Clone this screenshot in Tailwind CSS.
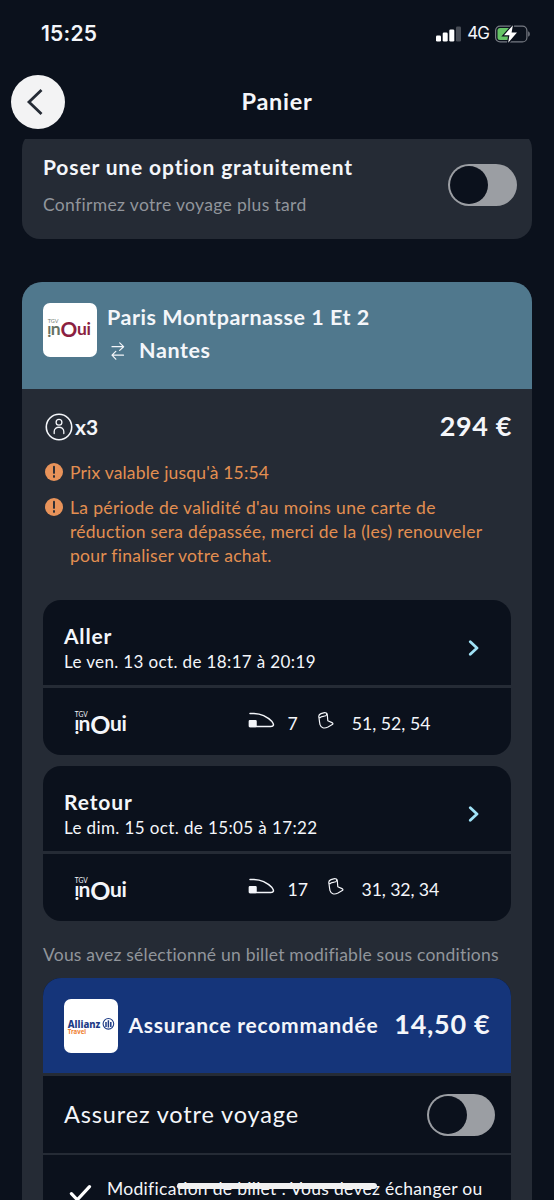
<!DOCTYPE html>
<html lang="fr">
<head>
    <meta charset="UTF-8">
    <meta name="viewport" content="width=device-width, initial-scale=1.0">
    <script src="https://cdn.jsdelivr.net/npm/@tailwindcss/browser@4"></script>
    <title>Panier</title>
</head>
<body class="bg-[#0b111c]">
    <div class="relative flex flex-col w-[554px] h-[1200px] overflow-hidden bg-[#0b111c] font-['Lato',sans-serif] text-[#f4f6fa] whitespace-nowrap">

        <!-- Status bar -->
        <div class="flex h-[67px] shrink-0 items-center justify-between pl-[41px] pr-[24px] font-['Inter',sans-serif]">
            <span class="text-[21px] font-semibold tracking-[0.2px]">15:25</span>
            <div class="flex items-center">
                <svg class="mr-[6px]" width="25" height="16" viewBox="0 0 25 16" fill="#fff">
                    <rect x="0" y="9.5" width="5" height="6" rx="1.3"/>
                    <rect x="6.7" y="6.5" width="5" height="9" rx="1.3"/>
                    <rect x="13.3" y="3.5" width="5" height="12" rx="1.3"/>
                    <rect x="20" y="0.5" width="5" height="15" rx="1.3" fill="#474c55"/>
                </svg>
                <span class="mr-[6px] text-[17px] tracking-[-1px]">4G</span>
                <svg width="35" height="18" viewBox="0 0 35 18">
                    <rect x="0.6" y="1.1" width="31.3" height="15.8" rx="4.5" fill="none" stroke="#777b83" stroke-width="1.2"/>
                    <path d="M33.2 6.2C35.3 7 35.3 11 33.2 11.8Z" fill="#777b83"/>
                    <rect x="2.5" y="3" width="14" height="12" rx="2.5" fill="#65c466"/>
                    <path d="M17.9 0.3L9 10.3H14.4L13.2 17.7L22 7.6H16.6Z" fill="#fff" stroke="#0b111c" stroke-width="2.4" paint-order="stroke"/>
                </svg>
            </div>
        </div>

        <!-- Header -->
        <header class="grid h-[72px] shrink-0 grid-cols-[54px_1fr_54px] items-center px-[11px]">
            <button class="-mt-0.5 flex size-[54px] items-center justify-center rounded-full bg-[#f3f3f4]">
                <svg width="54" height="54" viewBox="0 0 54 54" fill="none" stroke="#252b35" stroke-width="2.8">
                    <path d="M30.5 15L18 27L30.5 39"/>
                </svg>
            </button>
            <h1 class="-mt-0.5 text-center text-[23.5px] font-bold tracking-[0.7px]">Panier</h1>
        </header>

        <main class="flex h-[1061px] shrink-0 flex-col overflow-hidden px-[22px]">

            <!-- Option -->
            <section class="-mt-2 flex h-[107.5px] shrink-0 items-center justify-between rounded-[18px] bg-[#252b35] pl-[21px] pr-[15px]">
                <div>
                    <h2 class="text-[21px] leading-[29px] font-bold tracking-[0.86px]">Poser une option gratuitement</h2>
                    <p class="mt-[11px] text-[17.5px] leading-[26px] tracking-[0.34px] text-[#91959b]">Confirmez votre voyage plus tard</p>
                </div>
                <div class="flex h-[42px] w-[69px] items-center rounded-full bg-[#9b9ea3] pl-[2px]">
                    <div class="size-[38px] rounded-full bg-[#0b111c]"></div>
                </div>
            </section>

            <!-- Voyage -->
            <section class="mt-[43px] flex shrink-0 flex-col rounded-t-[20px] bg-[#252b35]">
                <div class="flex h-[107px] rounded-t-[20px] bg-[#50788d] pt-[21px] pl-[21px]">
                    <div class="flex size-[54px] items-center justify-center rounded-[7px] bg-white">
                        <svg class="mr-0.5 overflow-visible" width="44" height="21" viewBox="0 -1 53 25" font-family="Lato, sans-serif" font-weight="700">
                            <text x="0.8" y="4" font-size="6.6" font-weight="400" fill="#707972">TGV</text>
                            <text transform="translate(5.2 7.4) rotate(180)" font-size="18.5" fill="#667264">i</text>
                            <text x="4.4" y="18.3" font-size="21" fill="#667264">n</text>
                            <text x="16.2" y="21" font-size="25" fill="#8b1f41">O</text>
                            <text x="36" y="18.3" font-size="21" fill="#8b1f41">u</text>
                            <text x="47.6" y="18.3" font-size="21" fill="#8b1f41">i</text>
                        </svg>
                    </div>
                    <div class="ml-[10px] text-[21.5px] font-bold">
                        <div class="-mt-0.5 leading-[32px] tracking-[0.53px]">Paris Montparnasse 1 Et 2</div>
                        <div class="mt-[1.5px] flex items-center leading-[32px] tracking-[0.6px]">
                            <svg class="mt-0.5 mr-[14px] ml-[4px]" width="14" height="18" viewBox="0 0 14 18" fill="none" stroke="#f4f6fa" stroke-width="1.2" stroke-linecap="round" stroke-linejoin="round">
                                <path d="M1 4.7H12.5M8.7 0.8L12.6 4.7L8.7 8.4M12.5 13.2H1.2M4.8 9.4L1 13.2L4.8 17.2"/>
                            </svg>
                            <span>Nantes</span>
                        </div>
                    </div>
                </div>

                <div class="flex h-[77px] items-center justify-between pr-[20px] pl-[23px]">
                    <div class="flex items-center text-[21px] font-bold">
                        <svg class="mr-[2px]" width="28" height="28" viewBox="0 0 28 28" fill="none" stroke="#f4f6fa" stroke-linecap="round">
                            <circle cx="14" cy="14" r="12.7" stroke-width="1.6"/>
                            <circle cx="14" cy="9.3" r="2.9" stroke-width="1.3"/>
                            <path d="M9.2 20.5V18.6C9.2 12.8 18.8 12.8 18.8 18.6V20.5" stroke-width="1.3"/>
                        </svg>
                        x3
                    </div>
                    <span class="-mt-0.5 text-[27px] font-bold tracking-[0.6px]">294 €</span>
                </div>

                <div class="flex flex-col gap-[11px] pl-[23px] text-[17.5px] leading-[24px] tracking-[0.34px] text-[#e38f51]">
                    <div class="-mt-[5px] flex gap-[7px]">
                        <svg class="mt-[2px]" width="18" height="18" viewBox="0 0 18 18">
                            <circle cx="9" cy="9" r="9" fill="#e8935a"/>
                            <path d="M9 3.7V9.9M9 12.9V13.9" stroke="#252b35" stroke-width="1.9" stroke-linecap="round"/>
                        </svg>
                        <p class="tracking-[0.19px]">Prix valable jusqu'à 15:54</p>
                    </div>
                    <div class="flex gap-[7px]">
                        <svg class="mt-[2px]" width="18" height="18" viewBox="0 0 18 18">
                            <circle cx="9" cy="9" r="9" fill="#e8935a"/>
                            <path d="M9 3.7V9.9M9 12.9V13.9" stroke="#252b35" stroke-width="1.9" stroke-linecap="round"/>
                        </svg>
                        <p>La période de validité d'au moins une carte de<br><span class="tracking-[0.27px]">réduction sera dépassée, merci de la (les) renouveler<br>pour finaliser votre achat.</span></p>
                    </div>
                </div>

                <!-- Aller -->
                <article class="mx-[21px] mt-[32px] h-[155px] rounded-[18px] bg-[#0b111c]">
                    <div class="flex h-[88.5px] items-center justify-between border-b-[3px] border-[#252b35] pr-[31px] pl-[21px]">
                        <div class="mt-[13px]">
                            <h3 class="text-[21px] leading-[27px] font-bold tracking-[0.8px]">Aller</h3>
                            <p class="text-[17px] leading-[26px] tracking-[0.37px]">Le ven. 13 oct. de 18:17 à 20:19</p>
                        </div>
                        <svg class="mt-[12px]" width="12" height="16" viewBox="0 0 12 16" fill="none" stroke="#a0e2f6" stroke-width="2.8" stroke-linecap="round" stroke-linejoin="round">
                            <path d="M2.3 1.8L9 8L2.3 14.2"/>
                        </svg>
                    </div>
                    <div class="flex h-[66.5px] items-center pt-[6px] pl-[31px] text-[17.7px]">
                        <svg class="overflow-visible" width="53" height="25" viewBox="0 -1 53 25" font-family="Lato, sans-serif" font-weight="700" fill="#f4f6fa">
                            <text x="0.8" y="4" font-size="6.6" font-weight="400">TGV</text>
                            <text transform="translate(5.2 7.4) rotate(180)" font-size="18.5">i</text>
                            <text x="4.4" y="18.3" font-size="21">n</text>
                            <text x="16.2" y="21" font-size="25">O</text>
                            <text x="36" y="18.3" font-size="21">u</text>
                            <text x="47.6" y="18.3" font-size="21">i</text>
                        </svg>
                        <svg class="-mt-2 ml-[121px]" width="27" height="16" viewBox="0 0 27 16" fill="none" stroke="#f4f6fa" stroke-width="1.5" stroke-linejoin="round" stroke-linecap="round">
                            <path d="M2 1.5H6C13 1.7 19.5 5 24 9.6C26.6 12.8 25.4 14.4 23 14.4H2"/>
                            <rect x="1.4" y="8.7" width="6.6" height="5.8" rx="0.5" fill="#f4f6fa"/>
                        </svg>
                        <span class="ml-[12.5px]">7</span>
                        <svg class="-mt-2 ml-[20px]" width="16" height="17" viewBox="0 0 16 17" fill="none" stroke="#f4f6fa" stroke-width="1.2" stroke-linejoin="round">
                            <path d="M0.9 5C0.5 3.4 1.5 2.2 3 1.6L5.7 0.8C8 0.4 9.2 1.2 9.3 2.8L9.8 8.8L14 10.6C15.1 11.2 15.2 11.9 14.3 12.6L10 15C6 17 3 15.8 2 12.6C1.4 10 1.2 7 0.9 5Z"/>
                            <path d="M1 5.4C2 6.4 2.4 5.3 3.4 4.7C4.8 4 6 4.6 7.6 3.8C8.7 3.2 9 2.2 8.4 1.4"/>
                        </svg>
                        <span class="ml-[18px]">51, 52, 54</span>
                    </div>
                </article>

                <!-- Retour -->
                <article class="mx-[21px] mt-[11px] h-[155px] rounded-[18px] bg-[#0b111c]">
                    <div class="flex h-[88.5px] items-center justify-between border-b-[3px] border-[#252b35] pr-[31px] pl-[21px]">
                        <div class="mt-[13px]">
                            <h3 class="text-[21px] leading-[27px] font-bold tracking-[0.9px]">Retour</h3>
                            <p class="text-[17px] leading-[26px] tracking-[0.39px]">Le dim. 15 oct. de 15:05 à 17:22</p>
                        </div>
                        <svg class="mt-[12px]" width="12" height="16" viewBox="0 0 12 16" fill="none" stroke="#a0e2f6" stroke-width="2.8" stroke-linecap="round" stroke-linejoin="round">
                            <path d="M2.3 1.8L9 8L2.3 14.2"/>
                        </svg>
                    </div>
                    <div class="flex h-[66.5px] items-center pt-[6px] pl-[31px] text-[17.7px]">
                        <svg class="overflow-visible" width="53" height="25" viewBox="0 -1 53 25" font-family="Lato, sans-serif" font-weight="700" fill="#f4f6fa">
                            <text x="0.8" y="4" font-size="6.6" font-weight="400">TGV</text>
                            <text transform="translate(5.2 7.4) rotate(180)" font-size="18.5">i</text>
                            <text x="4.4" y="18.3" font-size="21">n</text>
                            <text x="16.2" y="21" font-size="25">O</text>
                            <text x="36" y="18.3" font-size="21">u</text>
                            <text x="47.6" y="18.3" font-size="21">i</text>
                        </svg>
                        <svg class="-mt-2 ml-[121px]" width="27" height="16" viewBox="0 0 27 16" fill="none" stroke="#f4f6fa" stroke-width="1.5" stroke-linejoin="round" stroke-linecap="round">
                            <path d="M2 1.5H6C13 1.7 19.5 5 24 9.6C26.6 12.8 25.4 14.4 23 14.4H2"/>
                            <rect x="1.4" y="8.7" width="6.6" height="5.8" rx="0.5" fill="#f4f6fa"/>
                        </svg>
                        <span class="ml-[12.5px]">17</span>
                        <svg class="-mt-2 ml-[19.5px]" width="16" height="17" viewBox="0 0 16 17" fill="none" stroke="#f4f6fa" stroke-width="1.2" stroke-linejoin="round">
                            <path d="M0.9 5C0.5 3.4 1.5 2.2 3 1.6L5.7 0.8C8 0.4 9.2 1.2 9.3 2.8L9.8 8.8L14 10.6C15.1 11.2 15.2 11.9 14.3 12.6L10 15C6 17 3 15.8 2 12.6C1.4 10 1.2 7 0.9 5Z"/>
                            <path d="M1 5.4C2 6.4 2.4 5.3 3.4 4.7C4.8 4 6 4.6 7.6 3.8C8.7 3.2 9 2.2 8.4 1.4"/>
                        </svg>
                        <span class="ml-[18px] tracking-[-0.1px]">31, 32, 34</span>
                    </div>
                </article>

                <p class="mt-[21px] ml-[21px] text-[17.5px] leading-[26px] tracking-[0.21px] text-[#91959b]">Vous avez sélectionné un billet modifiable sous conditions</p>

                <!-- Assurance -->
                <article class="mx-[21px] mt-[10.5px] overflow-hidden rounded-t-[18px] bg-[#0b111c]">
                    <div class="flex h-[98px] items-center border-b-[3px] border-[#252b35] bg-[#15357a] pl-[21px]">
                        <div class="flex size-[54px] items-center justify-center rounded-[7px] bg-white">
                            <svg width="54" height="54" viewBox="0 0 54 54">
                                <text x="3.8" y="28.8" font-family="Noto Sans, sans-serif" font-weight="800" font-size="11.3" fill="#1d3b85" textLength="32.5" lengthAdjust="spacingAndGlyphs">Allianz</text>
                                <text x="3.8" y="35.3" font-family="Noto Sans, sans-serif" font-weight="700" font-size="7" fill="#f08030" textLength="18.3" lengthAdjust="spacingAndGlyphs">Travel</text>
                                <g fill="none" stroke="#1d3b85">
                                    <circle cx="44.4" cy="24.8" r="5.3" stroke-width="1.1"/>
                                    <path d="M44.4 21.2V28.4M42 23V28M46.8 23V28" stroke-width="1.5"/>
                                </g>
                            </svg>
                        </div>
                        <span class="-mt-0.5 ml-[10.5px] text-[21px] font-bold tracking-[0.75px]">Assurance recommandée</span>
                        <span class="-mt-0.5 ml-[16px] text-[27px] font-bold tracking-[0.7px]">14,50 €</span>
                    </div>
                    <div class="flex h-[79px] items-center justify-between border-b-[2.5px] border-[#252b35] pr-[16px] pl-[21px]">
                        <span class="text-[23.5px] tracking-[0.85px]">Assurez votre voyage</span>
                        <div class="flex h-[42px] w-[68px] items-center rounded-full bg-[#9b9ea3] pl-[2px]">
                            <div class="size-[38px] rounded-full bg-[#0b111c]"></div>
                        </div>
                    </div>
                    <div class="flex pt-[21px] pl-[26px]">
                        <svg class="mt-[8px]" width="23" height="19" viewBox="0 0 23 19" fill="none" stroke="#fff" stroke-width="3.2" stroke-linecap="round">
                            <path d="M2.4 9.6L8.3 15.8L20.5 2.6"/>
                        </svg>
                        <p class="ml-[15px] text-[17.5px] leading-[26px] tracking-[0.3px]">Modification de billet : Vous devez échanger ou</p>
                    </div>
                </article>
            </section>
        </main>

        <!-- Home indicator -->
        <div class="absolute top-[1183px] left-[177px] h-[6px] w-[200px] rounded-full bg-[#f1f1f1]"></div>
    </div>
</body>
</html>
